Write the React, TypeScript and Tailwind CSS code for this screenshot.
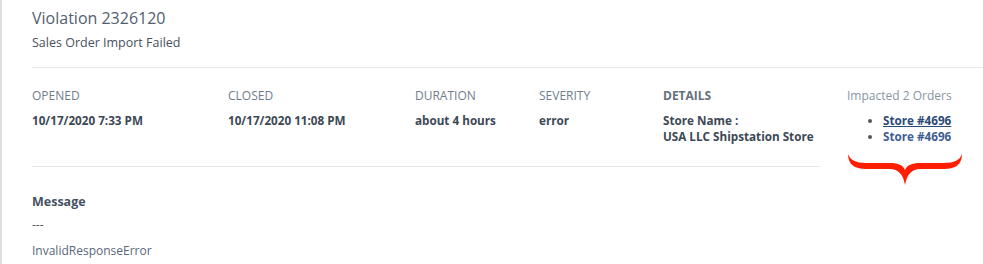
import React from "react";

type Field = {
  label: string;
  value: React.ReactNode;
  width: string;
  strongLabel?: boolean;
};

const fields: Field[] = [
  { label: "Opened", value: "10/17/2020 7:33 PM", width: "w-[196px]" },
  { label: "Closed", value: "10/17/2020 11:08 PM", width: "w-[187px]" },
  { label: "Duration", value: "about 4 hours", width: "w-[124px]" },
  { label: "Severity", value: "error", width: "w-[124px]" },
  {
    label: "Details",
    value: (
      <>
        Store Name :
        <br />
        USA LLC Shipstation Store
      </>
    ),
    width: "flex-1",
    strongLabel: true,
  },
];

function Brace() {
  return (
    <svg width="116" height="33" viewBox="-1 -1 116 33" className="block">
      <path
        d="M0,0 C0,10 6,15 18,15 L42,15 C50,15 55,20 57,31 C59,20 64,15 72,15 L96,15 C108,15 114,10 114,0 C112,6 106,9 96,9 L72,9 C64,9 59,11 57,16 C55,11 50,9 42,9 L18,9 C8,9 2,6 0,0 Z"
        fill="#ff1f00"
      />
    </svg>
  );
}

export default function App() {
  return (
    <main
      className="min-h-[264px] w-full border-l-2 border-[#dedede] bg-white pl-[30px] text-[#3e4a57]"
      style={{ fontFamily: '"Open Sans", "Liberation Sans", sans-serif' }}
    >
      <div className="pt-[6px]">
        <h1 className="text-[16px] leading-[24px] text-[#52606e]">Violation 2326120</h1>
        <p className="mt-[4px] text-[12.5px] leading-[18px] text-[#47525e]">Sales Order Import Failed</p>
      </div>

      <div className="mt-[15px] border-t border-[#e8e8e8]" />

      <div className="flex">
        <section className="w-[788px]">
          <div className="flex pt-[19px] pb-[22px]">
            {fields.map((f) => (
              <div key={f.label} className={f.width}>
                <div
                  className={
                    f.strongLabel
                      ? "text-[12px] font-bold uppercase leading-[18px] text-[#65717d]"
                      : "text-[12px] uppercase leading-[18px] text-[#6f7d8b]"
                  }
                >
                  {f.label}
                </div>
                <div className="mt-[7px] text-[11.7px] font-bold leading-[16px] text-[#3d4855]">{f.value}</div>
              </div>
            ))}
          </div>
          <div className="border-t border-[#e8e8e8]" />
        </section>

        <section className="ml-[27px] pt-[19px]">
          <div className="text-[12px] leading-[18px] text-[#8795a3]">Impacted 2 Orders</div>
          <div className="relative mt-[7px]">
            <ul className="list-disc pl-[36px] text-[11.7px] font-bold leading-[16px] text-[#405e91] marker:text-[#555]">
              <li>
                <a href="#" className="text-[#2c4a78] underline">
                  Store #4696
                </a>
              </li>
              <li>
                <a href="#">Store #4696</a>
              </li>
            </ul>
            {/* red annotation brace drawn over the page */}
            <div className="absolute left-0 top-full mt-[9px]">
              <Brace />
            </div>
          </div>
        </section>
      </div>

      <div className="pt-[26px]">
        <h2 className="text-[12.5px] font-bold leading-[18px] text-[#46525f]">Message</h2>
        <div className="mt-[5px] text-[12px] leading-[18px] text-[#555]">---</div>
        <div className="mt-[8px] text-[12px] leading-[18px] text-[#58687a]">InvalidResponseError</div>
      </div>
    </main>
  );
}
